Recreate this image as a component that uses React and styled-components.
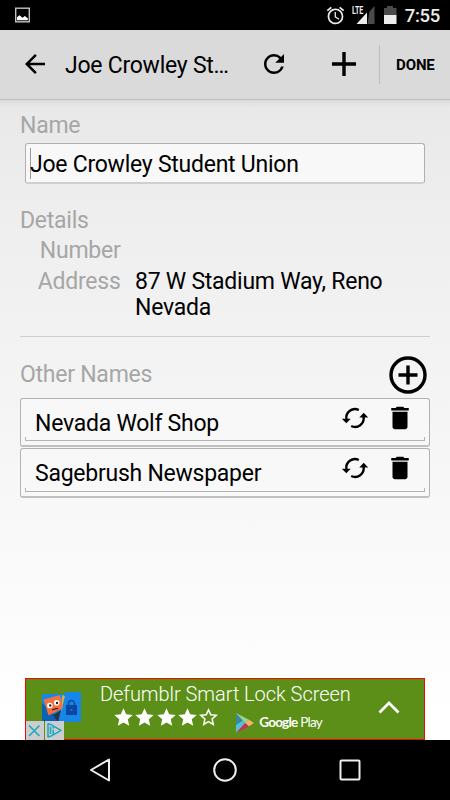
import styled, { createGlobalStyle } from "styled-components";
import { MdArrowBack, MdRefresh, MdDelete, MdAlarm } from "react-icons/md";

const GlobalStyle = createGlobalStyle`
  * {
    box-sizing: border-box;
  }
  body {
    margin: 0;
    font-family: Roboto, "Noto Sans", sans-serif;
    background: #000;
  }
  svg {
    display: block;
    flex: none;
  }
`;

const Screen = styled.div`
  width: 450px;
  height: 800px;
  display: flex;
  flex-direction: column;
  overflow: hidden;
  color: #000;
  font-size: 23px;
  letter-spacing: -0.25px;
`;

const StatusBar = styled.div`
  height: 30px;
  flex: none;
  display: flex;
  align-items: center;
  justify-content: space-between;
  padding: 0 10px 0 15px;
  background: #000;
`;
const StatusIcons = styled.div`
  display: flex;
  align-items: center;
`;
const Clock = styled.span`
  width: 36px;
  margin-left: 7px;
  padding-top: 2px;
  font-size: 18.5px;
  font-weight: 500;
  line-height: 30px;
  letter-spacing: -0.3px;
  text-align: right;
  color: #ececec;
`;

const AppBar = styled.header`
  height: 70px;
  flex: none;
  display: flex;
  align-items: center;
  padding: 0 0 1px 20px;
  background: #dadada;
  border-bottom: 1px solid #bcbcbc;
`;
const BackIcon = styled(MdArrowBack)`
  width: 30px;
  height: 30px;
`;
const Title = styled.h1`
  width: 166px;
  margin: 0 0 0 15px;
  padding-top: 4px;
  font-size: 23px;
  font-weight: 400;
  line-height: 28px;
  white-space: nowrap;
`;
const RefreshIcon = styled(MdRefresh)`
  width: 30px;
  height: 30px;
  margin-left: 28px;
`;
const AddIcon = styled.svg`
  margin-left: 43px;
`;
const Separator = styled.div`
  width: 1px;
  height: 39px;
  margin-left: 23px;
  background: #bdbdbd;
`;
const DoneButton = styled.button`
  margin: 1px 0 0 16px;
  padding: 0;
  border: 0;
  background: none;
  font: 700 15px/20px Roboto, sans-serif;
  letter-spacing: -0.1px;
  color: #000;
`;

const Content = styled.main`
  flex: 1;
  display: flex;
  flex-direction: column;
  padding: 13px 20px 0;
  background: linear-gradient(
    #dcdcdc 0,
    #e9e9e9 8px,
    #eeeeee 110px,
    #f3f3f3 260px,
    #ffffff 620px
  );
`;
const Label = styled.div`
  line-height: 26px;
  color: #a6a6a6;
  text-align: ${(props) => props.$align || "left"};
`;
const NameField = styled.div`
  height: 41px;
  margin: 4px 5px 0;
  padding: 0 0 0 4px;
  display: flex;
  align-items: center;
  border: 1px solid #b0b0b0;
  border-bottom: 2px solid #cfcfcf;
  border-radius: 3px;
  background: #f8f8f8;
  line-height: 26px;
`;
const Caret = styled.span`
  width: 1px;
  height: 31px;
  margin-right: -1px;
  background: #999;
`;
const NameValue = styled.span`
  padding-top: 3px;
`;
const Details = styled.section`
  display: grid;
  grid-template-columns: 100.5px 1fr;
  column-gap: 14.5px;
  row-gap: 4.7px;
  margin-top: 23.5px;
`;
const Heading = styled(Label)`
  grid-column: 1 / -1;
`;
const Value = styled.div`
  width: 270px;
  line-height: 26.4px;
`;
const Divider = styled.div`
  height: 1px;
  margin-top: 13.9px;
  background: #cfcfcf;
`;
const SectionHead = styled.div`
  height: 61px;
  display: flex;
  align-items: center;
  justify-content: space-between;
  padding: 15px 3px 0 0;
`;
const NameList = styled.ul`
  display: flex;
  flex-direction: column;
  gap: 1px;
  margin: 0;
  padding: 0;
  list-style: none;
`;
const NameItem = styled.li`
  height: 49.5px;
  padding: 0 4px 4px;
  display: flex;
  border: 1px solid #b2b2b2;
  border-bottom: 2px solid #c0c0c0;
  border-radius: 3px;
  background: #f8f8f8;
`;
const NameInner = styled.div`
  flex: 1;
  display: flex;
  padding: 0 9px 0 9px;
  border: 1px solid #b8b8b8;
  border-top: 0;
  border-image: linear-gradient(transparent 39px, #b4b4b4 39px) 1;
`;
const NameText = styled.span`
  flex: 1;
  padding-top: 12px;
  line-height: 26px;
`;
const ItemActions = styled.div`
  height: 38px;
  display: flex;
  align-items: center;
  gap: 16px;
`;
const TrashIcon = styled(MdDelete)`
  width: 30px;
  height: 30px;
`;

const AdBanner = styled.aside`
  height: 62px;
  margin: auto 5px 0;
  display: flex;
  border: 1px solid #f00a00;
  background: #5b8f18;
  color: #fff;
`;
const AdArt = styled.div`
  width: 74px;
`;
const AdBody = styled.div`
  flex: 1;
`;
const AdTitle = styled.div`
  padding-top: 3px;
  font-size: 20px;
  font-weight: 300;
  line-height: 24px;
  letter-spacing: -0.05px;
  white-space: nowrap;
`;
const AdMeta = styled.div`
  display: flex;
  align-items: center;
  padding: 6px 0 0 13px;
`;
const Stars = styled.div`
  display: flex;
  gap: 0.3px;
  margin-top: -10px;
`;
const PlayBadge = styled.div`
  display: flex;
  align-items: center;
  gap: 5px;
  margin-left: 17px;
`;
const PlayText = styled.span`
  padding-bottom: 1px;
  font: 400 13.5px/20px Lato, sans-serif;
  letter-spacing: -0.75px;
  white-space: nowrap;

  b {
    font-weight: 700;
  }
`;
const Chevron = styled.svg`
  margin: 21px 24px 0 0;
`;

const NavBar = styled.nav`
  height: 60px;
  flex: none;
  display: flex;
  align-items: center;
  justify-content: center;
  gap: 95px;
  background: #000;
`;

const STAR =
  "M10 1.4 12.5 7l6.1.6-4.6 4.1 1.3 6-5.3-3.1-5.3 3.1 1.3-6L1.4 7.6 7.5 7z";

const Star = ({ empty }) => (
  <svg width="21" height="21" viewBox="0.2 0.2 19.6 19.6">
    <path
      d={STAR}
      fill={empty ? "none" : "#fff"}
      stroke={empty ? "#fff" : "none"}
      strokeWidth="1.7"
      transform={empty ? "translate(1.6 1.6) scale(.84)" : undefined}
    />
  </svg>
);

const SyncIcon = () => (
  <svg width="28" height="24" viewBox="0 0 28 24">
    <g fill="none" stroke="#000" strokeWidth="2.4">
      <path d="M5.4 13.2A8.7 8.7 0 0 1 17.8 4" />
      <path d="M22.6 10.8A8.7 8.7 0 0 1 10.2 20" />
    </g>
    <path d="M.8 12.8h8.9L5.3 17.2zM18.3 11.4h8.9l-4.5-4.6z" />
  </svg>
);

const PlayLogo = () => (
  <svg width="18" height="20" viewBox="0 0 18 20">
    <path d="M0 0v20L9.3 10z" fill="#4fc3d4" />
    <path d="M0 0v12L7 7.5z" fill="#398a9f" />
    <path d="M0 0l13 6.8L9.3 10z" fill="#9bd589" />
    <path d="M0 20l13-6.8L9.3 10z" fill="#d52a5c" />
    <path d="M13 6.8l5 3.2-5 3.2L9.3 10z" fill="#f5b56b" />
  </svg>
);

const AdArtwork = () => (
  <svg width="60" height="61" viewBox="0 0 60 61">
    <path d="M16 15h22l2-2h15v30H16z" fill="#1687e8" />
    <path d="M16 36V24l17 16v3H16z" fill="#0b63b5" />
    <path d="M36 16l3 1-4 16z" fill="#c9b24b" />
    <path d="M27 36l8-5-3 12z" fill="#25364a" />
    <path d="M17.500 20.500 34 16l3 13-14.500 7.500z" fill="#f4703f" />
    <circle cx="23.800" cy="26.500" r="2.800" fill="#fff" />
    <circle cx="30.700" cy="23.800" r="2.800" fill="#fff" />
    <circle cx="24.200" cy="26.500" r="1.200" fill="#222" />
    <circle cx="31" cy="24" r="1.200" fill="#222" />
    <path d="M26.200 31.200l2-1 4-.8" fill="none" stroke="#552318" strokeWidth="1.300" />
    <rect x="40" y="26" width="11" height="10" fill="#0d47a1" />
    <path
      d="M42.500 26v-1.500a3 3 0 0 1 6 0V26"
      fill="none"
      stroke="#0d47a1"
      strokeWidth="1.400"
    />
    <circle cx="45.500" cy="31" r="1" fill="#1687e8" />
    <path d="M-1 42h19v20H-1zM19 42h19v20H19z" fill="#cdcdcd" />
    <g fill="none" stroke="#13a9c4" strokeWidth="1.500">
      <path d="M3 46.500 13.500 57M13.500 46.500 3 57" />
      <path
        d="M24.500 45.300 35 51.300 24.500 57.300M24.500 47.500v7.500M24.500 45.300l-2.500-.6v13.200l2.500-.6"
        strokeLinejoin="round"
      />
      <path d="M27.200 50.800v4.700M27.200 47.900v1.500" />
    </g>
  </svg>
);

const otherNames = ["Nevada Wolf Shop", "Sagebrush Newspaper"];

const App = () => {
  return (
    <Screen>
      <GlobalStyle />
      <StatusBar>
        <svg width="15" height="16" viewBox="0 0 15 16">
          <rect x="0.700" y="1.200" width="13.600" height="13.600" fill="none" stroke="#c4c4bd" strokeWidth="1.400" />
          <path d="M2 13.200v-3l2.500-2 3 2.500 2.300-1.600 3 2.200v1.900z" fill="#fff" />
        </svg>
        <StatusIcons>
          <MdAlarm size={21} color="#ececec" />
          <svg width="51" height="20" viewBox="-1 0 51 20">
            <path d="M22.500 6.500 27.500 1v18h-7z" fill="#4a4a4a" />
            <path d="M20 7.500v11.500H9.500z" fill="#ececec" />
            <text
              x="5"
              y="9"
              fontSize="11"
              fontWeight="700"
              textLength="11"
              lengthAdjust="spacingAndGlyphs"
              fill="#ececec"
            >
              LTE
            </text>
            <path d="M37 3h3V1h6v2h3.500v7H37z" fill="#4a4a4a" />
            <path d="M37 10h12.500v9H37z" fill="#ececec" />
          </svg>
          <Clock>7:55</Clock>
        </StatusIcons>
      </StatusBar>

      <AppBar>
        <BackIcon />
        <Title>Joe Crowley St…</Title>
        <RefreshIcon />
        <AddIcon width="24" height="24" viewBox="0 0 24 24">
          <path d="M0 12h24M12 0v24" stroke="#000" strokeWidth="3.400" />
        </AddIcon>
        <Separator />
        <DoneButton>DONE</DoneButton>
      </AppBar>

      <Content>
        <Label>Name</Label>
        <NameField>
          <Caret />
          <NameValue>Joe Crowley Student Union</NameValue>
        </NameField>

        <Details>
          <Heading>Details</Heading>
          <Label $align="right">Number</Label>
          <Value />
          <Label $align="right">Address</Label>
          <Value>87 W Stadium Way, Reno Nevada</Value>
        </Details>
        <Divider />

        <SectionHead>
          <Label>Other Names</Label>
          <svg width="38" height="38" viewBox="0 0 38 38">
            <g fill="none" stroke="#000" strokeWidth="3.400">
              <circle cx="19" cy="19" r="17" />
              <path d="M9.500 19h19M19 9.500v19" />
            </g>
          </svg>
        </SectionHead>
        <NameList>
          {otherNames.map((name) => (
            <NameItem key={name}>
              <NameInner>
                <NameText>{name}</NameText>
                <ItemActions>
                  <SyncIcon />
                  <TrashIcon />
                </ItemActions>
              </NameInner>
            </NameItem>
          ))}
        </NameList>

        <AdBanner>
          <AdArt>
            <AdArtwork />
          </AdArt>
          <AdBody>
            <AdTitle>Defumblr Smart Lock Screen</AdTitle>
            <AdMeta>
              <Stars>
                <Star />
                <Star />
                <Star />
                <Star />
                <Star empty />
              </Stars>
              <PlayBadge>
                <PlayLogo />
                <PlayText>
                  <b>Google</b> Play
                </PlayText>
              </PlayBadge>
            </AdMeta>
          </AdBody>
          <Chevron width="22" height="14" viewBox="0 0 22 14">
            <path d="M1.500 12.500 11 3l9.500 9.500" fill="none" stroke="#fff" strokeWidth="2.800" />
          </Chevron>
        </AdBanner>
      </Content>

      <NavBar>
        <svg width="30" height="30" viewBox="0 0 30 30">
          <path d="M24 4.500v21L6 15z" fill="none" stroke="#eee" strokeWidth="2" strokeLinejoin="round" />
        </svg>
        <svg width="30" height="30" viewBox="0 0 30 30">
          <circle cx="15" cy="15" r="10.800" fill="none" stroke="#eee" strokeWidth="2" />
        </svg>
        <svg width="30" height="30" viewBox="0 0 30 30">
          <rect x="5.500" y="5.500" width="19" height="19" rx="1" fill="none" stroke="#eee" strokeWidth="2" />
        </svg>
      </NavBar>
    </Screen>
  );
};

export default App;
